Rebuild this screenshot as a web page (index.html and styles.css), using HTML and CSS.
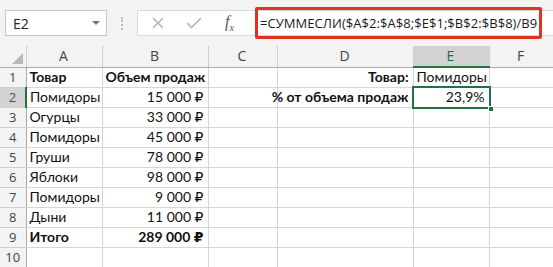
FILE: index.html
```html
<!DOCTYPE html>
<html lang="ru">
<head>
  <meta charset="UTF-8" />
  <title>Excel — СУММЕСЛИ</title>
  <link rel="stylesheet" href="styles.css">
</head>
<body>
  <div class="toolbar">
    <div class="namebox">
      <span>E2</span>
      <span class="arrow"></span>
    </div>
    <div class="grip"></div>
    <div class="fx-buttons">
      <svg class="ico" width="12" height="12" viewBox="0 0 12 12">
        <path d="M1 1 L11 11 M11 1 L1 11" stroke="#b5b5b5" stroke-width="1.6" fill="none"/>
      </svg>
      <svg class="ico" width="16" height="12" viewBox="0 0 16 12">
        <path d="M1 6 L5.5 10.5 L15 1" stroke="#b5b5b5" stroke-width="1.6" fill="none"/>
      </svg>
      <span class="fx">f<sub>x</sub></span>
    </div>
    <div class="formula">
      <div class="formula-text">=СУММЕСЛИ($A$2:$A$8;$E$1;$B$2:$B$8)/B9</div>
    </div>
  </div>

  <table class="sheet">
    <colgroup>
      <col class="w-rh"><col class="w-a"><col class="w-b"><col class="w-c"><col class="w-d"><col class="w-e"><col class="w-f">
    </colgroup>
    <tr class="head">
      <th class="corner"><span class="tri"></span></th>
      <th>A</th><th>B</th><th>C</th><th>D</th><th class="active">E</th><th>F</th>
    </tr>
    <tr>
      <th class="rh">1</th>
      <td class="b">Товар</td><td class="b num">Объем продаж</td><td></td>
      <td class="b num">Товар:</td><td>Помидоры</td><td></td>
    </tr>
    <tr>
      <th class="rh active">2</th>
      <td>Помидоры</td><td class="num">15 000 ₽</td><td></td>
      <td class="b num"><div class="spill">% от объема продаж</div></td>
      <td class="num sel">23,9%<div class="sel-box"><span class="handle"></span></div></td><td></td>
    </tr>
    <tr>
      <th class="rh">3</th>
      <td>Огурцы</td><td class="num">33 000 ₽</td><td></td><td></td><td></td><td></td>
    </tr>
    <tr>
      <th class="rh">4</th>
      <td>Помидоры</td><td class="num">45 000 ₽</td><td></td><td></td><td></td><td></td>
    </tr>
    <tr>
      <th class="rh">5</th>
      <td>Груши</td><td class="num">78 000 ₽</td><td></td><td></td><td></td><td></td>
    </tr>
    <tr>
      <th class="rh">6</th>
      <td>Яблоки</td><td class="num">98 000 ₽</td><td></td><td></td><td></td><td></td>
    </tr>
    <tr>
      <th class="rh">7</th>
      <td>Помидоры</td><td class="num">9 000 ₽</td><td></td><td></td><td></td><td></td>
    </tr>
    <tr>
      <th class="rh">8</th>
      <td>Дыни</td><td class="num">11 000 ₽</td><td></td><td></td><td></td><td></td>
    </tr>
    <tr>
      <th class="rh">9</th>
      <td class="b">Итого</td><td class="b num">289 000 ₽</td><td></td><td></td><td></td><td></td>
    </tr>
    <tr>
      <th class="rh">10</th>
      <td></td><td></td><td></td><td></td><td></td><td></td>
    </tr>
  </table>
</body>
</html>
```

FILE: styles.css
```css
* {
  margin: 0;
  padding: 0;
  box-sizing: border-box;
}

body {
  width: 553px;
  height: 267px;
  overflow: hidden;
  background: #fff;
  font-family: Lato, "DejaVu Sans", sans-serif;
}

/* formula bar */
.toolbar {
  height: 46px;
  background: #f3f3f3;
  display: flex;
  align-items: center;
  padding-left: 5px;
}

.namebox {
  width: 102px;
  height: 26px;
  background: #fff;
  border: 1px solid #c8c8c8;
  display: flex;
  align-items: center;
  justify-content: space-between;
  padding: 0 6px 0 7px;
  font-family: "Open Sans", "Noto Sans", sans-serif;
  font-size: 14px;
  color: #222;
}

.arrow {
  width: 0;
  height: 0;
  border-left: 4px solid transparent;
  border-right: 4px solid transparent;
  border-top: 4px solid #777;
}

.grip {
  width: 2px;
  height: 13px;
  margin: 0 14px 0 14px;
  border-left: 2px dotted #b9b9b9;
}

.fx-buttons {
  width: 110px;
  height: 26px;
  background: #fff;
  border: 1px solid #d8d8d8;
  border-right: none;
  display: flex;
  align-items: center;
  padding-left: 14px;
  gap: 22px;
}

.fx {
  font-family: "Liberation Serif", serif;
  font-style: italic;
  font-size: 16px;
  color: #555;
  margin-left: 1px;
}

.fx sub {
  font-size: 10px;
}

.formula {
  flex: 1;
  height: 26px;
  background: #fff;
  border-top: 1px solid #d8d8d8;
  border-bottom: 1px solid #d8d8d8;
  display: flex;
  align-items: center;
  padding-left: 8px;
}

.formula-text {
  height: 32px;
  width: 287px;
  flex: none;
  border: 3px solid #e0321f;
  border-radius: 2px;
  display: flex;
  align-items: center;
  padding-left: 2px;
  font-family: "Open Sans", "Noto Sans", sans-serif;
  font-size: 13px;
  color: #1a1a1a;
  white-space: nowrap;
  letter-spacing: 0.05px;
}

/* grid */
.sheet {
  border-collapse: collapse;
  table-layout: fixed;
  width: 553px;
  font-size: 14px;
  color: #111;
}

.w-rh { width: 26px; }
.w-a { width: 76px; }
.w-b { width: 106px; }
.w-c { width: 69px; }
.w-d { width: 136px; }
.w-e { width: 76px; }
.w-f { width: 64px; }

.sheet td,
.sheet th {
  height: 20px;
  border: 1px solid #d6d6d6;
  padding: 0 4px 0 3px;
  white-space: nowrap;
  overflow: visible;
  font-weight: normal;
  text-align: left;
  line-height: 18px;
}

.sheet tr:first-child th {
  border-top: none;
}

.sheet th:first-child {
  border-left: none;
}

.head th {
  height: 21px;
  background: #f3f3f3;
  border-color: #d0d0d0;
  border-bottom: 1px solid #ababab;
  text-align: center;
  font-family: "Open Sans", "Noto Sans", sans-serif;
  font-size: 14px;
  color: #444;
}

.head th.active {
  background: #d3d3d3;
  color: #1e6b45;
  border-bottom: 2px solid #217346;
}

.corner {
  position: relative;
}

.tri {
  position: absolute;
  right: 3px;
  bottom: 3px;
  width: 0;
  height: 0;
  border-left: 11px solid transparent;
  border-bottom: 11px solid #b9b9b9;
}

.sheet th.rh {
  background: #f3f3f3;
  border-color: #d0d0d0;
  border-right: 1px solid #ababab;
  text-align: center;
  padding: 0;
  font-family: "Open Sans", "Noto Sans", sans-serif;
  font-size: 13px;
  color: #444;
}

.sheet th.rh.active {
  background: #d3d3d3;
  color: #1e6b45;
  border-right: 2px solid #217346;
}

.sheet td.b {
  font-weight: bold;
}

.sheet td.num {
  text-align: right;
}

.spill {
  display: flex;
  justify-content: flex-end;
}

.sel {
  position: relative;
}

.sel-box {
  position: absolute;
  left: -2px;
  top: -2px;
  right: -2px;
  bottom: -2px;
  border: 2px solid #217346;
}

.handle {
  position: absolute;
  right: -5px;
  bottom: -5px;
  width: 6px;
  height: 6px;
  background: #217346;
  border: 1px solid #fff;
}
```
